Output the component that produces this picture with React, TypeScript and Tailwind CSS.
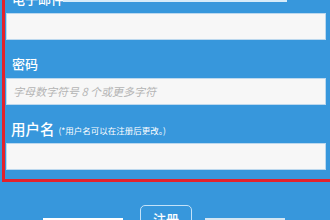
import React from "react";

const font = { fontFamily: '"Noto Sans CJK SC", "Noto Sans", sans-serif' };

function Label({ children, size }: { children: React.ReactNode; size: "sm" | "lg" }) {
  return (
    <div
      className={
        size === "lg"
          ? "h-[18px] leading-[18px] pl-[5px] text-[14.5px] font-medium text-white whitespace-nowrap flex items-center"
          : "h-[18px] leading-[18px] pl-[6px] text-[13px] font-medium text-white whitespace-nowrap flex items-center"
      }
    >
      {children}
    </div>
  );
}

function Field({ placeholder }: { placeholder?: string }) {
  return (
    <div className="mt-[5px] h-[27px] w-[320px] bg-[#f7f7f7] border border-[#bcd8ee] flex items-center pl-[6px]">
      {placeholder ? (
        <span className="text-[11px] italic text-[#b4b4b4] whitespace-nowrap">{placeholder}</span>
      ) : null}
    </div>
  );
}

export default function App() {
  return (
    <div className="relative w-[330px] h-[220px] overflow-hidden bg-[#3797dc]" style={font}>
      <div className="absolute top-0 left-[63px] w-[224px] h-[2px] bg-[#d6ebf9]" />
      <div className="flex">
        <div className="ml-[2px] w-[3px] shrink-0 bg-[#e2222c]" />
        <div className="flex-1 min-w-0 flex flex-col">
          <div className="-mt-[10px] pl-[1px] flex flex-col">
            <Label size="sm">电子邮件</Label>
            <Field />
            <div className="mt-[15px]">
              <Label size="sm">密码</Label>
            </div>
            <Field placeholder="字母数字符号 8 个或更多字符" />
            <div className="mt-[15px]">
              <Label size="lg">
                <span>用户名</span>
                <span className="ml-[4px] text-[8.5px] font-normal mt-[2px]">(*用户名可以在注册后更改。)</span>
              </Label>
            </div>
            <Field />
          </div>
          <div className="mt-[9px]" />
        </div>
      </div>
      <div className="ml-[2px] h-[3px] bg-[#e2222c]" />
      <div className="flex items-start">
        <div className="ml-[43px] mt-[36px] w-[80px] h-[3px] bg-white" />
        <div className="ml-[17px] mt-[23px] w-[52px] h-[28px] rounded-[5px] border-[1.5px] border-[#c4e2f8] flex justify-center pt-[4px] text-[13px] font-medium text-white leading-[18px]">
          注册
        </div>
        <div className="ml-[13px] mt-[36px] w-[80px] h-[3px] bg-[#d3e6f3]" />
      </div>
    </div>
  );
}
